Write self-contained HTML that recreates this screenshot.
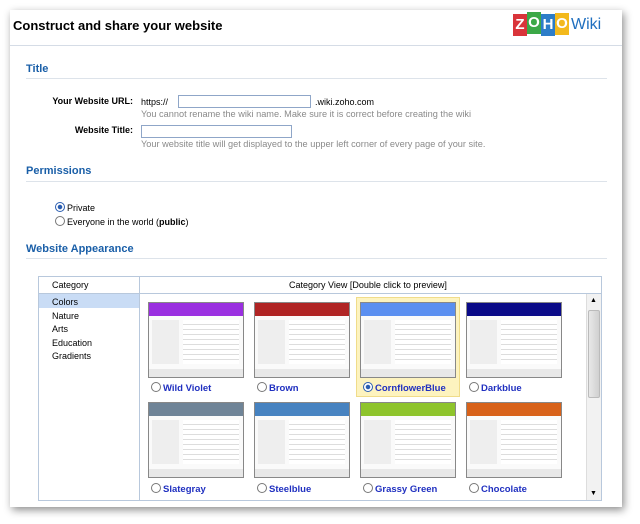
<!DOCTYPE html>
<html><head><style>
*{margin:0;padding:0;box-sizing:border-box}
body{width:640px;height:524px;background:#fff;font-family:"Liberation Sans",Arial,sans-serif;position:relative;overflow:hidden}
.win{position:absolute;left:10px;top:10px;width:612px;height:497px;background:#fff;box-shadow:2px 3px 8px rgba(0,0,0,.45)}
.a{position:absolute}
.h{font-size:11px;color:#1a5fa8;font-weight:bold}
.line{position:absolute;height:1px;background:#dde3ea}
.lbl{font-size:9px;font-weight:bold;text-align:right;width:120px}
.t{font-size:9px}
.hint{font-size:9.2px;color:#8a8a8a}
.inp{position:absolute;border:1px solid #8fa6c8;background:#fff;height:13px}
.thumb{position:absolute;width:96px;height:76px;border:1px solid #888;background:#fafafa}
.thumb .bar{height:13px}
.thumb .l{position:absolute;left:3px;top:17px;width:27px;height:44px;background:#eee}
.thumb .r{position:absolute;left:34px;top:17px;width:56px;height:44px;background:repeating-linear-gradient(#fff 0 4px,#ddd 4px 5px)}
.thumb .f{position:absolute;left:0;bottom:0;width:100%;height:8px;background:#e8e8e8}
.cap{position:absolute;font-size:9.5px;font-weight:bold;color:#2030c0}
.rad{display:inline-block;width:10px;height:10px;border:1px solid #777;border-radius:50%;background:#fff;vertical-align:-1px;margin-right:2px}
</style></head><body>
<div class="win">
<div class="a" style="left:3px;top:8px;font-size:13px;font-weight:bold">Construct and share your website</div>
<div class="a" style="left:503px;top:4px;width:14px;height:22px;background:#d9343a;color:#fff;font-weight:bold;font-size:15px;text-align:center;line-height:22px">Z</div>
<div class="a" style="left:517px;top:2px;width:14px;height:22px;background:#3ba847;color:#fff;font-weight:bold;font-size:15px;text-align:center;line-height:22px">O</div>
<div class="a" style="left:531px;top:4px;width:14px;height:22px;background:#2d7dc8;color:#fff;font-weight:bold;font-size:15px;text-align:center;line-height:22px">H</div>
<div class="a" style="left:545px;top:3px;width:14px;height:22px;background:#f3b91c;color:#fff;font-weight:bold;font-size:15px;text-align:center;line-height:22px">O</div>
<div class="a" style="left:561px;top:6px;font-size:16px;color:#1f6fbf">Wiki</div>
<div class="line" style="left:0;top:35px;width:612px;background:#d5dce6"></div>

<div class="a h" style="left:16px;top:53px">Title</div>
<div class="line" style="left:16px;top:68px;width:581px"></div>
<div class="a lbl" style="left:3px;top:86px">Your Website URL:</div>
<div class="a t" style="left:131px;top:87px">https://</div>
<div class="inp" style="left:168px;top:85px;width:133px"></div>
<div class="a t" style="left:305px;top:87px">.wiki.zoho.com</div>
<div class="a hint" style="left:131px;top:99px">You cannot rename the wiki name. Make sure it is correct before creating the wiki</div>
<div class="a lbl" style="left:3px;top:115px">Website Title:</div>
<div class="inp" style="left:131px;top:115px;width:151px"></div>
<div class="a hint" style="left:131px;top:129px">Your website title will get displayed to the upper left corner of every page of your site.</div>

<div class="a h" style="left:16px;top:155px">Permissions</div>
<div class="line" style="left:16px;top:171px;width:581px"></div>
<div class="a t" style="left:45px;top:192px"><span class="rad" style="border-color:#2a5db0;background:radial-gradient(#2a5db0 35%,#fff 45%)"></span>Private</div>
<div class="a t" style="left:45px;top:206px"><span class="rad"></span>Everyone in the world (<b>public</b>)</div>

<div class="a h" style="left:16px;top:233px">Website Appearance</div>
<div class="line" style="left:16px;top:248px;width:581px"></div>

<div class="a" style="left:28px;top:266px;width:564px;height:225px;border:1px solid #b8c8dc"></div>
<div class="a" style="left:129px;top:266px;width:1px;height:225px;background:#b8c8dc"></div>
<div class="a" style="left:28px;top:283px;width:564px;height:1px;background:#b8c8dc"></div>
<div class="a t" style="left:42px;top:270px">Category</div>
<div class="a t" style="left:279px;top:270px">Category View [Double click to preview]</div>
<div class="a" style="left:29px;top:284px;width:100px;height:14px;background:#c9dcf5"></div>
<div class="a t" style="left:42px;top:286px;line-height:13.5px">Colors<br>Nature<br>Arts<br>Education<br>Gradients</div>

<div class="a" style="left:346px;top:287px;width:104px;height:100px;background:#fdf3bf;border:1px solid #f0dc8a"></div>

<div class="thumb" style="left:138px;top:292px"><div class="bar" style="background:#9a2fe0"></div><div class="l"></div><div class="r"></div><div class="f"></div></div>
<div class="thumb" style="left:244px;top:292px"><div class="bar" style="background:#b02424"></div><div class="l"></div><div class="r"></div><div class="f"></div></div>
<div class="thumb" style="left:350px;top:292px"><div class="bar" style="background:#5b8ff0"></div><div class="l"></div><div class="r"></div><div class="f"></div></div>
<div class="thumb" style="left:456px;top:292px"><div class="bar" style="background:#0a0a88"></div><div class="l"></div><div class="r"></div><div class="f"></div></div>
<div class="cap" style="left:141px;top:372px"><span class="rad"></span>Wild Violet</div>
<div class="cap" style="left:247px;top:372px"><span class="rad"></span>Brown</div>
<div class="cap" style="left:353px;top:372px"><span class="rad" style="border-color:#2a5db0;background:radial-gradient(#2a5db0 35%,#fff 45%)"></span>CornflowerBlue</div>
<div class="cap" style="left:459px;top:372px"><span class="rad"></span>Darkblue</div>

<div class="thumb" style="left:138px;top:392px"><div class="bar" style="background:#6f8497"></div><div class="l"></div><div class="r"></div><div class="f"></div></div>
<div class="thumb" style="left:244px;top:392px"><div class="bar" style="background:#4682c0"></div><div class="l"></div><div class="r"></div><div class="f"></div></div>
<div class="thumb" style="left:350px;top:392px"><div class="bar" style="background:#8ec42c"></div><div class="l"></div><div class="r"></div><div class="f"></div></div>
<div class="thumb" style="left:456px;top:392px"><div class="bar" style="background:#d8621a"></div><div class="l"></div><div class="r"></div><div class="f"></div></div>
<div class="cap" style="left:141px;top:473px"><span class="rad"></span>Slategray</div>
<div class="cap" style="left:247px;top:473px"><span class="rad"></span>Steelblue</div>
<div class="cap" style="left:353px;top:473px"><span class="rad"></span>Grassy Green</div>
<div class="cap" style="left:459px;top:473px"><span class="rad"></span>Chocolate</div>

<div class="a" style="left:576px;top:284px;width:15px;height:206px;background:#f2f2f2;border-left:1px solid #ddd"></div>
<div class="a" style="left:578px;top:300px;width:12px;height:88px;background:linear-gradient(90deg,#e8e8e8,#d0d0d0);border:1px solid #bbb;border-radius:2px"></div>
<div class="a" style="left:580px;top:287px;font-size:7px">▲</div>
<div class="a" style="left:580px;top:480px;font-size:7px">▼</div>
</div>
</body></html>
